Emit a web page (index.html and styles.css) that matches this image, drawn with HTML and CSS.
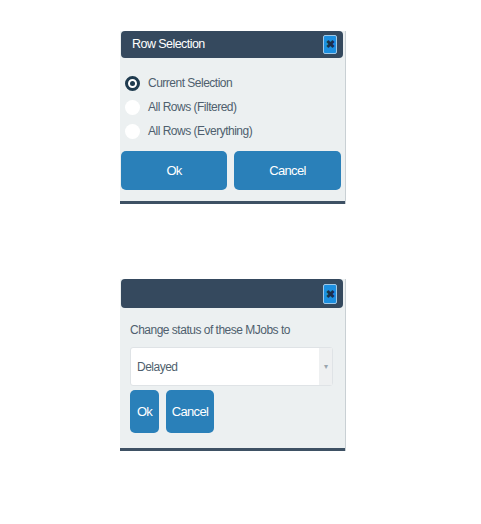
FILE: index.html
```html
<!DOCTYPE html>
<html>
<head>
<meta charset="utf-8">
<link rel="stylesheet" href="styles.css">
</head>
<body>
<div class="page">
  <div class="dialog dialog-rows">
    <div class="header">
      <span class="title">Row Selection</span>
      <span class="close">&#x2716;</span>
    </div>
    <div class="body">
      <div class="options">
        <label class="option"><span class="radio checked"></span><span>Current Selection</span></label>
        <label class="option"><span class="radio"></span><span>All Rows (Filtered)</span></label>
        <label class="option"><span class="radio"></span><span>All Rows (Everything)</span></label>
      </div>
      <div class="actions wide">
        <button class="btn">Ok</button>
        <button class="btn">Cancel</button>
      </div>
    </div>
  </div>

  <div class="dialog dialog-status">
    <div class="header tall">
      <span class="title"></span>
      <span class="close">&#x2716;</span>
    </div>
    <div class="body body-status">
      <div class="prompt">Change status of these MJobs to</div>
      <div class="select">
        <span class="value">Delayed</span>
        <span class="arrow">&#x25BE;</span>
      </div>
      <div class="actions compact">
        <button class="btn small">Ok</button>
        <button class="btn small">Cancel</button>
      </div>
    </div>
  </div>
</div>
</body>
</html>
```
FILE: styles.css
```css
* { box-sizing: border-box; }
html, body { margin: 0; padding: 0; background: #ffffff; }
body {
  font-family: "Liberation Sans", Arial, sans-serif;
  font-size: 12px;
  letter-spacing: -0.5px;
  color: #4f5f6e;
}
.page {
  display: flex;
  flex-direction: column;
  padding-left: 120px;
  padding-top: 31px;
}
.dialog {
  width: 225px;
  background: #ecf0f1;
  border-bottom: 3px solid #3e5164;
  box-shadow: 1px 0 0 #c9d0d4;
}
.dialog-status { margin-top: 75px; }

.header {
  margin: 0 2px 0 1px;
  height: 27px;
  background: #35495e;
  border-radius: 4px;
  display: flex;
  align-items: center;
  justify-content: space-between;
  padding: 0 6px 0 11px;
}
.header.tall { height: 29px; }
.title {
  color: #ffffff;
  font-size: 12.5px;
  letter-spacing: -0.55px;
  margin-top: -2px;
}
.close {
  width: 14px;
  height: 19px;
  background: #1c8fe0;
  border: 1px solid #9ec7e6;
  border-radius: 2px;
  color: #1d2f4a;
  font-size: 10.5px;
  line-height: 17px;
  text-align: center;
  letter-spacing: 0;
  font-weight: bold;
}
.header.tall .close { height: 20px; line-height: 18px; margin-top: 1px; }

.body { padding: 13px 4px 11px 1px; }
.options {
  display: flex;
  flex-direction: column;
  padding-left: 4px;
}
.option {
  display: flex;
  align-items: center;
  gap: 8px;
  height: 24px;
}
.radio {
  width: 15px;
  height: 15px;
  border-radius: 50%;
  background: #ffffff;
  flex: none;
}
.radio.checked {
  background: #ffffff;
  border: 3px solid #1f3b4f;
  position: relative;
}
.radio.checked::after {
  content: "";
  position: absolute;
  left: 2px;
  top: 2px;
  width: 5px;
  height: 5px;
  border-radius: 50%;
  background: #1f3b4f;
}

.actions { display: flex; gap: 7px; }
.actions.wide { margin-top: 8px; }
.btn {
  font-family: "Liberation Sans", Arial, sans-serif;
  font-size: 13px;
  letter-spacing: -0.7px;
  color: #ffffff;
  background: #2a80b9;
  border: none;
  border-radius: 5px;
  height: 39px;
  padding: 0;
}
.actions.wide .btn { width: 106px; }
.actions.wide .btn + .btn { width: 107px; }

.body-status { padding: 15px 12px 15px 10px; }
.prompt { line-height: 14px; }
.select {
  margin-top: 10px;
  width: 203px;
  height: 39px;
  background: #ffffff;
  border: 1px solid #dfe3e6;
  border-radius: 3px;
  display: flex;
  align-items: center;
  justify-content: space-between;
}
.value { padding-left: 6px; }
.arrow {
  width: 13px;
  height: 100%;
  background: #eef0f1;
  color: #9aa5ad;
  font-size: 8px;
  display: flex;
  align-items: center;
  justify-content: center;
}
.actions.compact { margin-top: 4px; }
.btn.small { height: 43px; width: 29px; }
.btn.small + .btn.small { width: 48px; }
```
